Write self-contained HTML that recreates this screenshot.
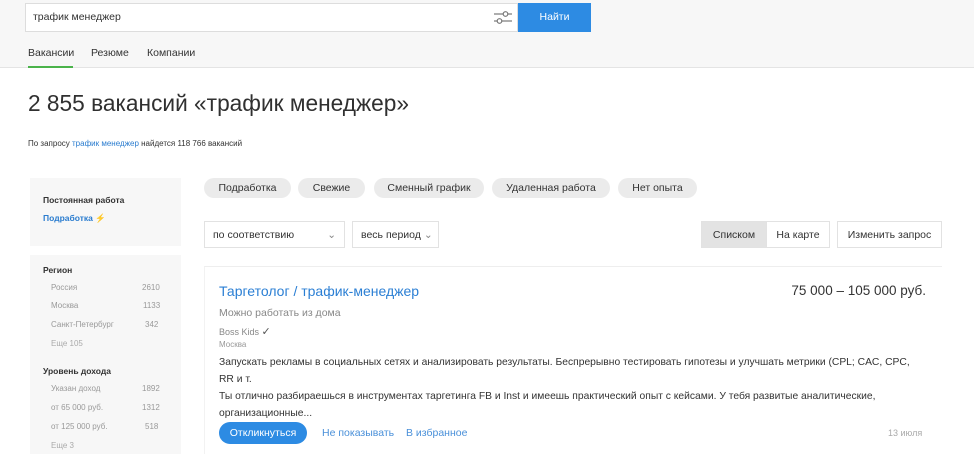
<!DOCTYPE html>
<html><head><meta charset="utf-8"><style>
*{margin:0;padding:0;box-sizing:border-box}
body{width:974px;height:454px;overflow:hidden;background:#fff;font-family:"Liberation Sans",sans-serif;color:#333;position:relative}
.a{position:absolute;white-space:nowrap}
.hdr{position:absolute;left:0;top:0;width:974px;height:68px;background:#f7f7f7;border-bottom:1px solid #e4e4e4}
.chip{position:absolute;top:178px;height:20px;background:#ebebeb;border-radius:10px;font-size:10.5px;line-height:20px;text-align:center;color:#333}
.box{position:absolute;border:1px solid #e2e2e2;background:#fff;font-size:10.5px;line-height:26px;color:#333}
.side{position:absolute;left:30px;width:151px;background:#f7f7f7}
.s{font-size:8px;color:#333}
.g{font-size:8px;color:#999}
.blue{color:#2a7ccf}
</style></head><body>
<div class="hdr"></div>
<div class="a" style="left:25px;top:3px;width:493px;height:29px;background:#fff;border:1px solid #ddd"></div>
<div class="a" style="left:33px;top:11px;font-size:10.5px;color:#333">трафик менеджер</div>
<svg class="a" style="left:493px;top:9px" width="20" height="17" viewBox="0 0 20 17"><g stroke="#777" fill="none" stroke-width="1.2"><line x1="1" y1="5" x2="10" y2="5"/><circle cx="12.5" cy="5" r="2.3"/><line x1="15" y1="5" x2="19" y2="5"/><line x1="1" y1="12" x2="4" y2="12"/><circle cx="6.5" cy="12" r="2.3"/><line x1="9" y1="12" x2="19" y2="12"/></g></svg>
<div class="a" style="left:518px;top:3px;width:73px;height:29px;background:#2d8be3;color:#fff;font-size:10.5px;line-height:29px;text-align:center">Найти</div>
<div class="a" style="left:28px;top:47px;font-size:10.5px">Вакансии</div>
<div class="a" style="left:91px;top:47px;font-size:10.5px">Резюме</div>
<div class="a" style="left:147px;top:47px;font-size:10.5px">Компании</div>
<div class="a" style="left:28px;top:66px;width:45px;height:2px;background:#4bb34b"></div>
<div class="a" style="left:28px;top:90px;font-size:22.7px;color:#303030">2 855 вакансий «трафик менеджер»</div>
<div class="a" style="left:28px;top:139px;font-size:8px">По запросу <span class="blue">трафик менеджер</span> найдется 118 766 вакансий</div>

<div class="side" style="top:178px;height:68px"></div>
<div class="side" style="top:255px;height:199px"></div>
<div class="a s" style="left:43px;top:195px;font-weight:bold;font-size:8.5px">Постоянная работа</div>
<div class="a s blue" style="left:43px;top:213px;font-weight:bold;font-size:8.5px">Подработка <span style="color:#f5b82e">⚡</span></div>
<div class="a s" style="left:43px;top:265px;font-weight:bold;font-size:8.5px">Регион</div>
<div class="a g" style="left:51px;top:283px">Россия</div><div class="a g" style="left:142px;top:283px">2610</div>
<div class="a g" style="left:51px;top:301px">Москва</div><div class="a g" style="left:143px;top:301px">1133</div>
<div class="a g" style="left:51px;top:320px">Санкт-Петербург</div><div class="a g" style="left:145px;top:320px">342</div>
<div class="a g" style="left:51px;top:339px;color:#aaa">Еще 105</div>
<div class="a s" style="left:43px;top:366px;font-weight:bold;font-size:8.5px">Уровень дохода</div>
<div class="a g" style="left:51px;top:384px">Указан доход</div><div class="a g" style="left:142px;top:384px">1892</div>
<div class="a g" style="left:51px;top:403px">от 65 000 руб.</div><div class="a g" style="left:142px;top:403px">1312</div>
<div class="a g" style="left:51px;top:422px">от 125 000 руб.</div><div class="a g" style="left:145px;top:422px">518</div>
<div class="a g" style="left:51px;top:441px;color:#aaa">Еще 3</div>

<div class="chip" style="left:204px;width:87px">Подработка</div>
<div class="chip" style="left:298px;width:67px">Свежие</div>
<div class="chip" style="left:374px;width:110px">Сменный график</div>
<div class="chip" style="left:492px;width:118px">Удаленная работа</div>
<div class="chip" style="left:618px;width:79px">Нет опыта</div>

<div class="box" style="left:204px;top:221px;width:141px;height:27px;padding-left:8px">по соответствию<span style="position:absolute;right:8px;top:0;color:#888">⌄</span></div>
<div class="box" style="left:352px;top:221px;width:87px;height:27px;padding-left:8px">весь период <span style="color:#888">⌄</span></div>
<div class="box" style="left:701px;top:221px;width:66px;height:27px;background:#e3e3e3;text-align:center">Списком</div>
<div class="box" style="left:766px;top:221px;width:64px;height:27px;text-align:center">На карте</div>
<div class="box" style="left:837px;top:221px;width:105px;height:27px;text-align:center">Изменить запрос</div>

<div class="a" style="left:204px;top:266px;width:738px;height:188px;border-top:1px solid #eee;border-left:1px solid #f2f2f2;background:#fff"></div>
<div class="a blue" style="left:219px;top:283px;font-size:14px;color:#2b7fd4">Таргетолог / трафик-менеджер</div>
<div class="a" style="right:48px;top:283px;font-size:13.5px;color:#333">75 000 – 105 000 руб.</div>
<div class="a" style="left:219px;top:307px;font-size:10.5px;color:#888">Можно работать из дома</div>
<div class="a" style="left:219px;top:325px;font-size:9px;color:#888">Boss Kids <span style="color:#555;font-size:11px">✓</span></div>
<div class="a" style="left:219px;top:340px;font-size:8px;color:#999">Москва</div>
<div class="a" style="left:219px;top:354px;font-size:10.3px;line-height:17px;color:#333;white-space:normal;width:698px">Запускать рекламы в социальных сетях и анализировать результаты. Беспрерывно тестировать гипотезы и улучшать метрики (CPL; CAC, CPC, RR&nbsp;и&nbsp;т.<br>Ты отлично разбираешься в инструментах таргетинга FB и Inst и имеешь практический опыт с кейсами. У тебя развитые аналитические, организационные...</div>
<div class="a" style="left:219px;top:422px;width:88px;height:22px;border-radius:11px;background:#2d8be3;color:#fff;font-size:10.5px;line-height:22px;text-align:center">Откликнуться</div>
<div class="a blue" style="left:322px;top:427px;font-size:10.5px;color:#4a90d9">Не показывать</div>
<div class="a blue" style="left:406px;top:427px;font-size:10.5px;color:#4a90d9">В избранное</div>
<div class="a" style="left:888px;top:428px;font-size:9px;color:#aaa">13 июля</div>
</body></html>
